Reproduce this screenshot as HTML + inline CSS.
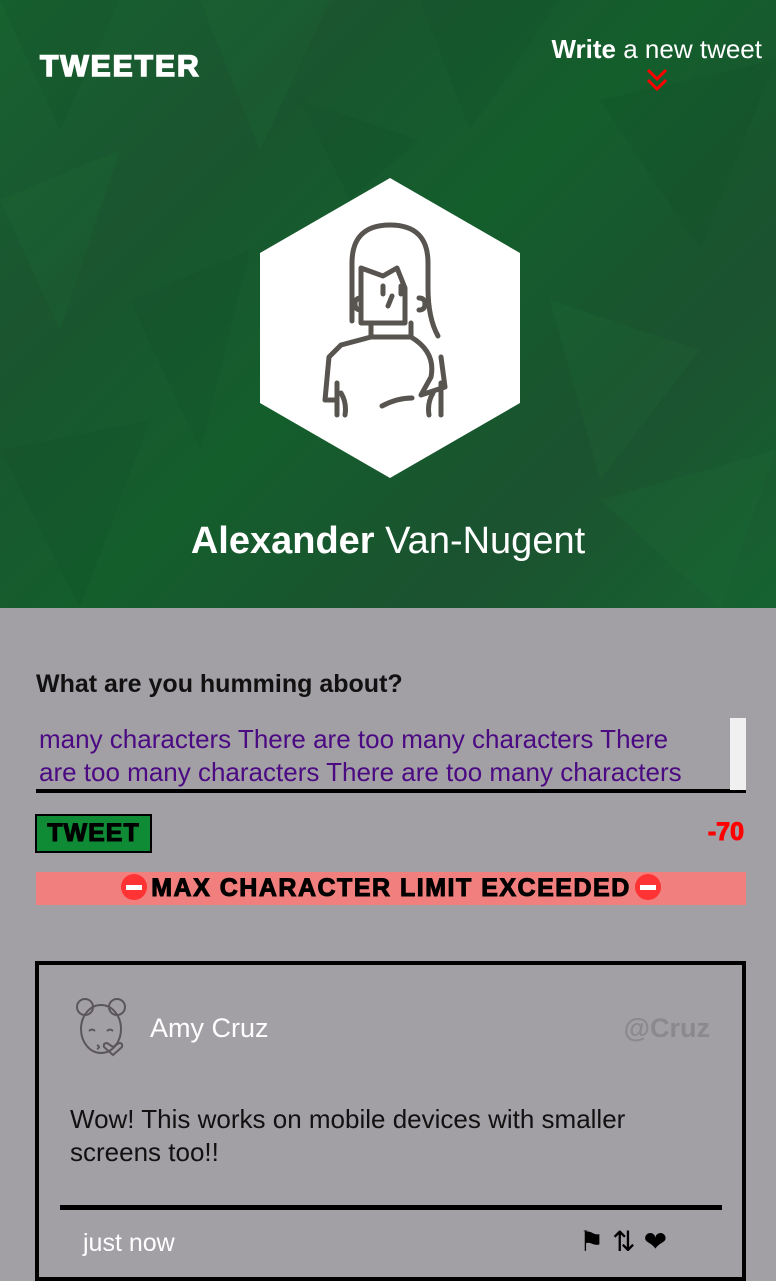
<!DOCTYPE html>
<html><head><meta charset="utf-8"><style>
*{margin:0;padding:0;box-sizing:border-box}
body{width:776px;height:1249px;overflow:hidden;background:#a29fa5;font-family:"Liberation Sans Narrow","Liberation Sans",sans-serif;position:relative}
header{position:absolute;left:0;top:0;width:776px;height:608px;background:linear-gradient(135deg,#17622f 0%,#1a5530 25%,#145e2c 50%,#1b5230 75%,#166330 100%);overflow:hidden}
.logo{position:absolute;left:40px;top:50px;color:#fff;font:900 30px "Liberation Sans",sans-serif;letter-spacing:2px;-webkit-text-stroke:1.5px #fff}
.write{position:absolute;right:14px;top:34px;color:#fff;font-size:26px;font-weight:300}
.write b{font-weight:700}
.arr{position:absolute;left:646px;top:68px}
.name{position:absolute;left:0;width:776px;top:520px;text-align:center;color:#fff;font-size:38px}
.name b{font-weight:700}
.q{position:absolute;left:36px;top:670px;font-size:25px;color:#111;font-weight:600}
.ta{position:absolute;left:36px;top:718px;width:710px;height:75px;border-bottom:4px solid #000;color:#4b0a82;font-size:26px;line-height:33px;padding-left:3px;padding-top:5px;overflow:hidden}
.sb{position:absolute;right:30px;top:718px;width:16px;height:72px;background:#f0f0f0}
.btn{position:absolute;left:35px;top:814px;width:117px;height:39px;background:#0f8a35;border:2px solid #000;font:900 25px "Liberation Sans",sans-serif;text-align:center;line-height:35px;color:#000;letter-spacing:1px;-webkit-text-stroke:1px #000}
.cnt{position:absolute;right:32px;top:818px;color:#f00;font:900 25px "Liberation Sans",sans-serif;-webkit-text-stroke:1px #f00}
.err{position:absolute;left:36px;top:872px;width:710px;height:33px;background:#f07f7d;text-align:center;font:900 25px/33px "Liberation Sans",sans-serif;color:#000;letter-spacing:1.5px;-webkit-text-stroke:1px #000;white-space:nowrap}
.no{display:inline-block;width:26px;height:26px;border-radius:50%;background:#f33;vertical-align:-4px;position:relative;-webkit-text-stroke:0;margin:0 4px}
.no:after{content:"";position:absolute;left:5px;right:5px;top:11px;height:5px;background:#fff}
.card{position:absolute;left:35px;top:961px;width:711px;height:320px;border:4px solid #000}
.amy{position:absolute;left:111px;top:48px;color:#fff;font-size:27px;font-weight:300}
.h{position:absolute;right:32px;top:48px;color:#8b888e;font-size:27px;font-weight:600}
.msg{position:absolute;left:31px;top:138px;width:620px;font-size:26px;line-height:33px;color:#111}
.line{position:absolute;left:21px;top:240px;width:662px;height:5px;background:#000}
.jn{position:absolute;left:44px;top:264px;font-size:25px;color:#fff;font-weight:300}
</style></head><body>
<header>
<svg width="776" height="608" style="position:absolute;left:0;top:0;opacity:.15">
<polygon points="0,0 120,0 60,130" fill="#0d4a22"/><polygon points="200,0 330,0 260,150" fill="#22793c"/>
<polygon points="420,0 560,0 470,130" fill="#0d4a22"/><polygon points="600,100 776,60 700,250" fill="#0d4a22"/>
<polygon points="0,200 120,150 60,330" fill="#22793c"/><polygon points="130,300 250,250 200,450" fill="#0d4a22"/>
<polygon points="550,300 700,350 600,480" fill="#22793c"/><polygon points="0,450 150,420 80,608" fill="#0d4a22"/>
<polygon points="600,500 776,450 720,608" fill="#22793c"/><polygon points="300,100 420,140 350,200" fill="#0d4a22"/>
</svg>
<div class="logo">TWEETER</div>
<div class="write"><b>Write</b> a new tweet</div>
<svg class="arr" width="22" height="26" viewBox="0 0 22 26"><path d="M2 2l9 9 9-9M2 12l9 9 9-9" stroke="#f00" stroke-width="3" fill="none"/></svg>
<svg style="position:absolute;left:259px;top:178px" width="262" height="300" viewBox="0 0 262 300">
<polygon points="131,0 261,75 261,225 131,300 1,225 1,75" fill="#fff"/>
<g stroke="#58544f" stroke-width="5" fill="none" stroke-linecap="round" stroke-linejoin="round">
<path d="M93 143V85q0-38 38-38t38 38v25q0 30 10 48"/>
<path d="M102 145V90l22 8 14-8 8 20v35z"/>
<path d="M102 120q-6 0-6 6t6 6M160 120q6 0 6 6t-6 6"/>
<path d="M124 108v8M142 108v8M133 118l-4 10"/>
<path d="M112 145v14M152 145v14M112 159h40"/>
<path d="M112 159l-30 8-12 12-4 43h12M152 159q25 15 20 40l-10 18 24-8-4-30"/>
<path d="M78 205v32M82 215q6 10 4 22M182 205v32M174 215q-6 10-4 22"/>
<path d="M123 228q15-8 30-8"/>
</g></svg>
<div class="name"><b>Alexander</b> <span style="font-weight:300">Van-Nugent</span></div>
</header>
<div class="q">What are you humming about?</div>
<div class="ta">many characters There are too many characters There<br>are too many characters There are too many characters</div>
<div class="sb"></div>
<div class="btn">TWEET</div>
<div class="cnt">-70</div>
<div class="err"><span class="no"></span>MAX CHARACTER LIMIT EXCEEDED<span class="no"></span></div>
<div class="card">
<svg style="position:absolute;left:34px;top:30px" width="56" height="64" viewBox="0 0 56 64"><g stroke="#5a5659" stroke-width="2" fill="none"><ellipse cx="28" cy="34" rx="20" ry="24"/><circle cx="12" cy="12" r="8"/><circle cx="44" cy="12" r="8"/><path d="M16 36q3-3 6 0M34 36q3-3 6 0M24 50q4 2 0 4"/><path d="M40 52l6-4q4 0 3 4l-9 8-9-8q-1-4 3-4z"/></g></svg>
<div class="amy">Amy Cruz</div>
<div class="h">@Cruz</div>
<div class="msg">Wow! This works on mobile devices with smaller screens too!!</div>
<div class="line"></div>
<div class="jn">just now</div>
<div style="position:absolute;left:540px;top:260px;font-size:28px;color:#000;letter-spacing:8px">&#9873;&#8645;&#10084;</div>
</div>
</body></html>
